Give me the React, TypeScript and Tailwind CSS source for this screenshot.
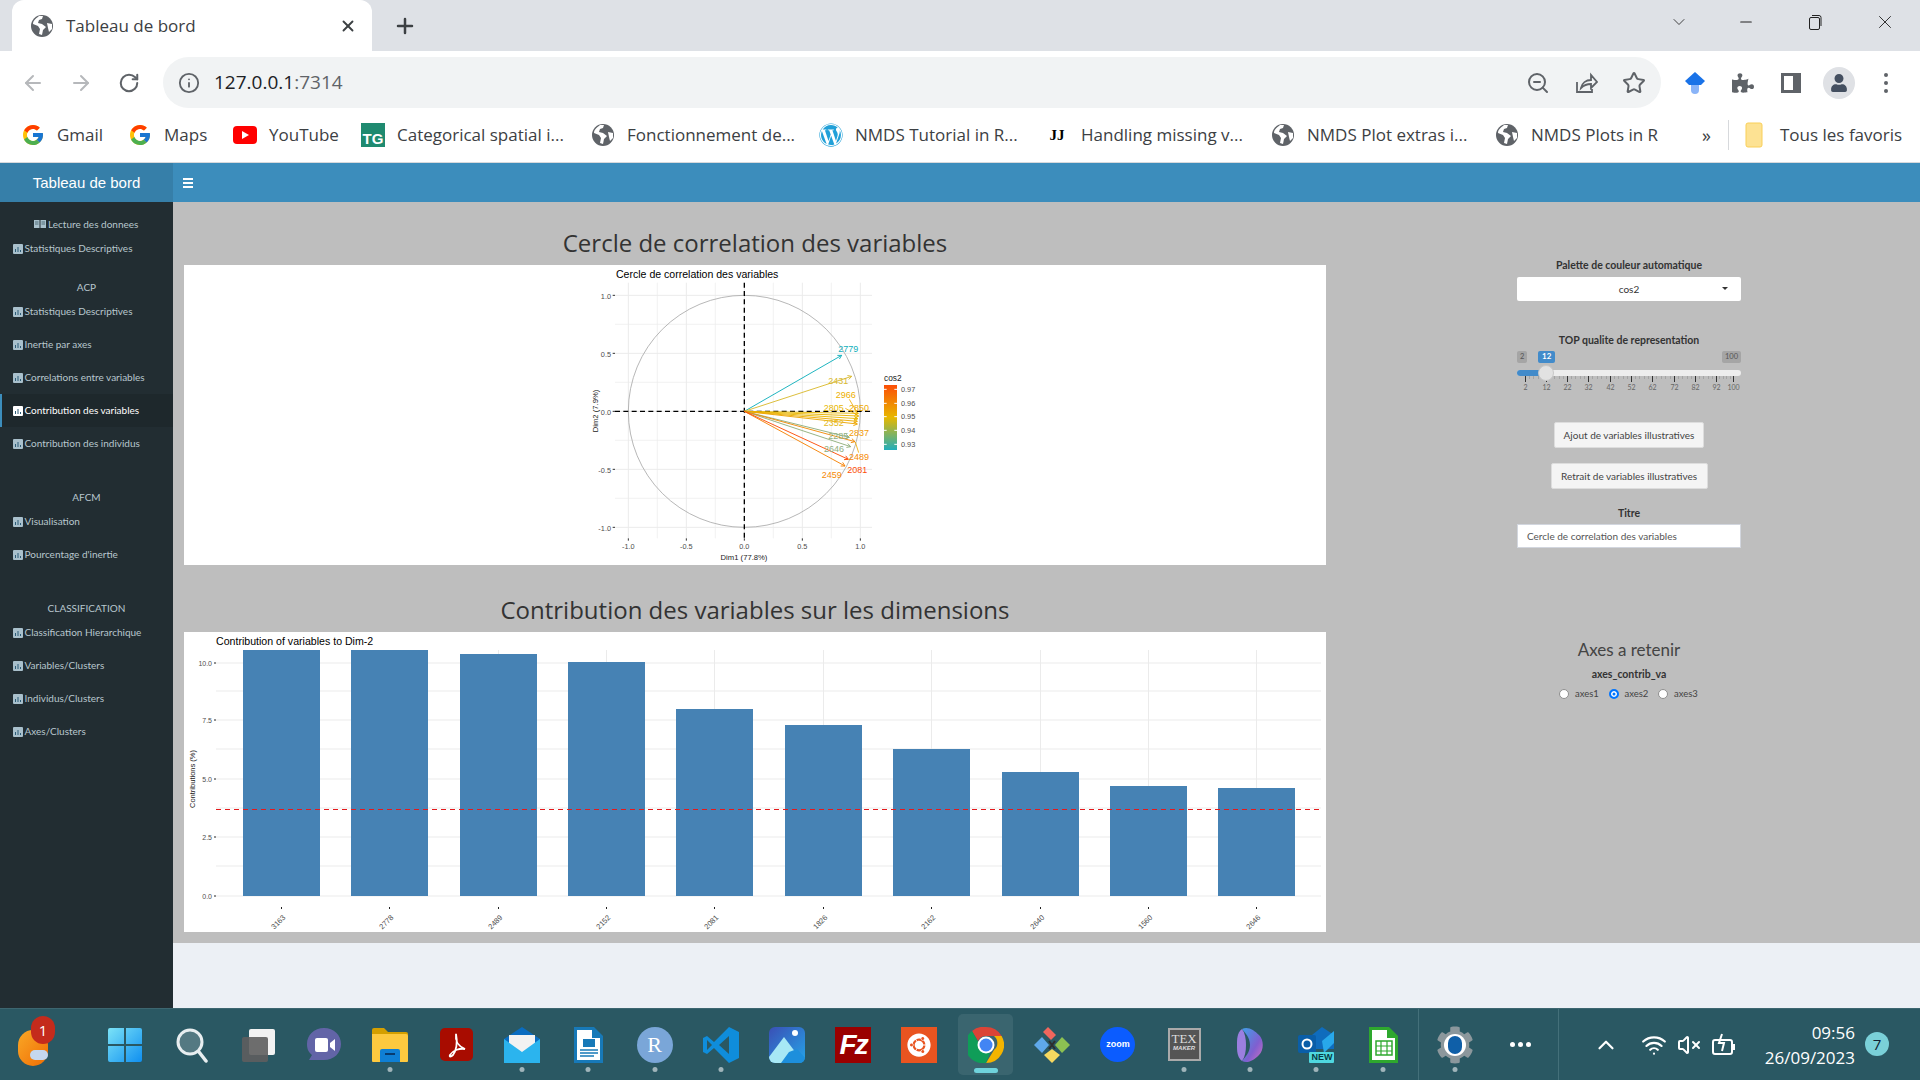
import { ArrowLeft, ArrowRight, ChevronDown, ChevronUp, Info, Minus, Plus, RotateCw, Star, VolumeX, Wifi, X, ZoomOut } from 'lucide-react';
import type { ReactNode } from 'react';
import { FaCog, FaPuzzlePiece, FaUbuntu, FaUser, FaWordpress } from 'react-icons/fa';
import { FcGoogle } from 'react-icons/fc';

const Globe = () => (
  <svg width="24" height="24" viewBox="0 0 24 24">
    <circle cx="12" cy="12" r="11" fill="#5f6368" />
    <path d="M9 2c-2 2-6 4-6 8l5 2 2 3-1 5 3 1 1-5 3-3-4-3-4-1 1-3 3-1 1-3z" fill="#fff" />
    <path d="M17 9l5 1v5l-3 3-1-4z" fill="#fff" />
  </svg>
);

const bookmarks = [
  { w: 107, label: 'Gmail', icon: <FcGoogle size={24} /> },
  { w: 105, label: 'Maps', icon: <FcGoogle size={24} /> },
  {
    w: 128,
    label: 'YouTube',
    icon: (
      <svg width="24" height="18" viewBox="0 0 24 18">
        <rect width="24" height="18" rx="4" fill="#f00" />
        <path d="M9 5l7 4-7 4z" fill="#fff" />
      </svg>
    ),
  },
  {
    w: 230,
    label: 'Categorical spatial i...',
    icon: (
      <div className="w-6 h-6 bg-[#1f8a70] flex items-end justify-center text-white text-[15px] leading-4 font-bold font-['Liberation_Sans',sans-serif]">TG</div>
    ),
  },
  { w: 228, label: 'Fonctionnement de...', icon: <Globe /> },
  { w: 226, label: 'NMDS Tutorial in R...', icon: <FaWordpress size={24} color="#21a0d8" /> },
  { w: 226, label: 'Handling missing v...', icon: <span className="text-black font-bold text-[15px] font-['Liberation_Serif',serif]">JJ</span> },
  { w: 224, label: 'NMDS Plot extras i...', icon: <Globe /> },
  { w: 206, label: 'NMDS Plots in R', icon: <Globe /> },
];

// sidebar icon: small bar chart tile
const BarTile = ({ active }: { active?: boolean }) => (
  <svg width="10" height="10" viewBox="0 0 10 10" className="shrink-0">
    <rect width="10" height="10" rx="1" fill={active ? '#ffffff' : '#a9c0cc'} />
    <path d="M2 5h1v3H2zM4.500 3h1v5h-1zM7 6h1v2H7z" fill="#2c5d78" />
  </svg>
);

const SideItem = ({ label, active }: { label: string; active?: boolean }) => (
  <div className={`h-[33px] flex items-center pl-[13px] gap-[1.500px] ${active ? 'bg-[#1e282c] text-white relative' : 'text-[#b8c7ce]'}`}>
    {active && <div className="absolute left-0 top-0 bottom-0 w-[2px] bg-[#3c8dbc]" />}
    <BarTile active={active} />
    <span className="whitespace-nowrap">{label}</span>
  </div>
);

const SideHeading = ({ label, className }: { label: string; className: string }) => (
  <div className={`text-center text-[#b8c7ce] leading-[14px] ${className}`}>{label}</div>
);

const Sidebar = () => (
  <div className="w-[173px] shrink-0 bg-[#222d32] text-[10px] font-['Lato',sans-serif]">
    <div className="h-[39px] pt-[1px] bg-[#367fa9] flex items-center justify-center text-white text-[15px] font-['Liberation_Sans',sans-serif]">Tableau de bord</div>
    <div className="mt-[15px] h-[14px] flex items-center pl-[34px] gap-[2px] text-[#b8c7ce]">
      <svg width="12" height="9" viewBox="0 0 12 9" className="shrink-0">
        <path d="M0 0h5.500v8H0zM6.500 0H12v8H6.500z" fill="#a9c0cc" />
        <path d="M1 2h3.500M1 4h3.500M7.500 2H11M7.500 4H11" stroke="#2c4a58" strokeWidth=".7" />
      </svg>
      <span>Lecture des donnees</span>
    </div>
    <div className="mt-[1px]"><SideItem label="Statistiques Descriptives" /></div>
    <SideHeading label="ACP" className="mt-[15px]" />
    <div className="mt-[1px]">
      <SideItem label="Statistiques Descriptives" />
      <SideItem label="Inertie par axes" />
      <SideItem label="Correlations entre variables" />
      <SideItem label="Contribution des variables" active />
      <SideItem label="Contribution des individus" />
    </div>
    <SideHeading label="AFCM" className="mt-[30px]" />
    <div className="mt-[1px]">
      <SideItem label="Visualisation" />
      <SideItem label="Pourcentage d'inertie" />
    </div>
    <SideHeading label="CLASSIFICATION" className="mt-[30px]" />
    <div className="mt-[1px]">
      <SideItem label="Classification Hierarchique" />
      <SideItem label="Variables/Clusters" />
      <SideItem label="Individus/Clusters" />
      <SideItem label="Axes/Clusters" />
    </div>
  </div>
);

const Arrow = ({ x, y, color }: { x: number; y: number; color: string }) => {
  const a = Math.atan2(y - 454, x - 523);
  const len = 13;
  const p1 = [x - len * Math.cos(a - 0.5), y - len * Math.sin(a - 0.5)];
  const p2 = [x - len * Math.cos(a + 0.5), y - len * Math.sin(a + 0.5)];
  return (
    <g stroke={color} strokeWidth="2.800" fill="none">
      <line x1="523" y1="454" x2={x} y2={y} />
      <path d={`M${p1[0]} ${p1[1]}L${x} ${y}L${p2[0]} ${p2[1]}`} />
    </g>
  );
};

const arrows = [
  { x: 815, y: 286, color: '#0fafbb' },
  { x: 845, y: 349, color: '#d9b92e' },
  { x: 865, y: 460, color: '#e7b800' },
  { x: 866, y: 468, color: '#e9b300' },
  { x: 864, y: 476, color: '#e7b800' },
  { x: 862, y: 484, color: '#eeaa00' },
  { x: 862, y: 492, color: '#eda600' },
  { x: 838, y: 532, color: '#8fae7c' },
  { x: 842, y: 560, color: '#8fae7c' },
  { x: 855, y: 545, color: '#f28a05' },
  { x: 825, y: 618, color: '#f58000' },
  { x: 835, y: 598, color: '#fc4e07' },
];

const arrowLabels = [
  { t: '2779', x: 835, y: 275, c: '#0fafbb' },
  { t: '2431', x: 805, y: 371, c: '#d9b92e' },
  { t: '2966', x: 827, y: 413, c: '#ecb000' },
  { t: '2805', x: 791, y: 453, c: '#e7b800' },
  { t: '2850', x: 867, y: 453, c: '#eeaa00' },
  { t: '2352', x: 791, y: 498, c: '#e4ba1c' },
  { t: '2285', x: 805, y: 537, c: '#8fae7c' },
  { t: '2837', x: 867, y: 527, c: '#f29a05' },
  { t: '2646', x: 792, y: 575, c: '#8fae7c' },
  { t: '2489', x: 867, y: 599, c: '#f58a05' },
  { t: '2081', x: 862, y: 640, c: '#fc4e07' },
  { t: '2459', x: 785, y: 653, c: '#f58a05' },
];

const gridStops = [175, 262, 349, 436, 523, 610, 697, 784, 871];
const gridStopsY = [106, 193, 280, 367, 454, 541, 628, 715, 802];

// drawn in the units of the zoomed crop, 3 per pixel
const CircleChart = () => (
  <svg width="1142" height="300" viewBox="-1158 15 3426 900" className="block bg-white font-['Liberation_Sans',sans-serif]">
    <text x="138" y="53" fontSize="31.700" fill="#000">Cercle de correlation des variables</text>
    {gridStops.map((x) => <line key={x} x1={x} x2={x} y1="68" y2="835" stroke="#ebebeb" strokeWidth={(x - 175) % 174 === 0 ? 3 : 2} />)}
    {gridStopsY.map((y) => <line key={y} y1={y} y2={y} x1="135" x2="906" stroke="#ebebeb" strokeWidth={(y - 106) % 174 === 0 ? 3 : 2} />)}
    <circle cx="523" cy="454" r="348" fill="none" stroke="#a8a8a8" strokeWidth="2.500" />
    <line x1="135" x2="906" y1="454" y2="454" stroke="#000" strokeWidth="4" strokeDasharray="15 10" />
    <line x1="523" x2="523" y1="68" y2="835" stroke="#000" strokeWidth="4" strokeDasharray="15 10" />
    {arrows.map((a) => <Arrow key={`${a.x}-${a.y}`} {...a} />)}
    <g stroke="#eeaa00" strokeWidth="2.500">
      <line x1="838" y1="418" x2="864" y2="462" />
      <line x1="826" y1="445" x2="862" y2="465" />
      <line x1="856" y1="546" x2="866" y2="578" />
    </g>
    {arrowLabels.map((l) => (
      <text key={l.t} x={l.x} y={l.y} fontSize="27" fill={l.c} textAnchor="middle">{l.t}</text>
    ))}
    {[['1.0', 106], ['0.5', 280], ['0.0', 454], ['-0.5', 628], ['-1.0', 802]].map(([t, y]) => (
      <g key={t}>
        <line x1="128" x2="135" y1={y} y2={y} stroke="#333" strokeWidth="3" />
        <text x="123" y={Number(y) + 10} fontSize="22" textAnchor="end" fill="#4d4d4d">{t}</text>
      </g>
    ))}
    {[['-1.0', 175], ['-0.5', 349], ['0.0', 523], ['0.5', 697], ['1.0', 871]].map(([t, x]) => (
      <g key={t}>
        <line x1={x} x2={x} y1="835" y2="842" stroke="#333" strokeWidth="3" />
        <text x={x} y="867" fontSize="22" textAnchor="middle" fill="#4d4d4d">{t}</text>
      </g>
    ))}
    <text x="522" y="900" fontSize="23" textAnchor="middle" fill="#222">Dim1 (77.8%)</text>
    <text transform="translate(85 453) rotate(-90)" fontSize="23" textAnchor="middle" fill="#222">Dim2 (7.9%)</text>
    <text x="942" y="364" fontSize="25" fill="#222">cos2</text>
    <defs>
      <linearGradient id="cos2" x1="0" y1="0" x2="0" y2="1">
        <stop offset="0" stopColor="#fc4e07" />
        <stop offset="0.5" stopColor="#e7b800" />
        <stop offset="1" stopColor="#22aebb" />
      </linearGradient>
    </defs>
    <rect x="942" y="375" width="39" height="195" fill="url(#cos2)" />
    {[['0.97', 388], ['0.96', 430], ['0.95', 470], ['0.94', 511], ['0.93', 553]].map(([t, y]) => (
      <g key={t}>
        <path d={`M942 ${y}h8M973 ${y}h8`} stroke="#fff" strokeWidth="3" />
        <text x="993" y={Number(y) + 8} fontSize="22" fill="#4d4d4d">{t}</text>
      </g>
    ))}
  </svg>
);

const bars = [
  { x: 243, top: 650, label: '3163' },
  { x: 351, top: 650, label: '2778' },
  { x: 460, top: 654, label: '2489' },
  { x: 568, top: 662, label: '2152' },
  { x: 676, top: 709, label: '2081' },
  { x: 785, top: 725, label: '1826' },
  { x: 893, top: 749, label: '2162' },
  { x: 1002, top: 772, label: '2640' },
  { x: 1110, top: 786, label: '1560' },
  { x: 1218, top: 788, label: '2646' },
];

const BarChart = () => (
  <svg width="1142" height="300" viewBox="184 632 1142 300" className="block bg-white font-['Liberation_Sans',sans-serif]">
    <text x="216" y="645" fontSize="10.600" fill="#000">Contribution of variables to Dim-2</text>
    {[663, 691, 720, 749, 779, 808, 837, 866, 896].map((y) => (
      <line key={y} x1="216" x2="1321" y1={y} y2={y} stroke="#ebebeb" strokeWidth="1" />
    ))}
    {bars.map((b) => (
      <line key={b.x} x1={b.x + 38.500} x2={b.x + 38.500} y1="650" y2="896" stroke="#ebebeb" strokeWidth="1" />
    ))}
    {bars.map((b) => (
      <g key={b.label}>
        <rect x={b.x} y={b.top} width="77" height={896 - b.top} fill="#4682b4" />
        <line x1={b.x + 38.500} x2={b.x + 38.500} y1="907" y2="909" stroke="#222" />
        <text transform={`translate(${b.x + 43} 918) rotate(-45)`} fontSize="7.500" textAnchor="end" fill="#4d4d4d">{b.label}</text>
      </g>
    ))}
    <line x1="216" x2="1321" y1="809.500" y2="809.500" stroke="#e41a1c" strokeWidth="1" strokeDasharray="5 4" />
    {[['10.0', 663], ['7.5', 720], ['5.0', 779], ['2.5', 837], ['0.0', 896]].map(([t, y]) => (
      <g key={t}>
        <line x1="214" x2="216" y1={y} y2={y} stroke="#222" />
        <text x="212" y={Number(y) + 2.500} fontSize="7" textAnchor="end" fill="#4d4d4d">{t}</text>
      </g>
    ))}
    <text transform="translate(195 779) rotate(-90)" fontSize="7.500" textAnchor="middle" fill="#222">Contributions (%)</text>
  </svg>
);

const sliderMajor = [1525, 1546, 1567, 1588, 1610, 1631, 1652, 1674, 1695, 1716, 1733];
const sliderLabels = ['2', '12', '22', '32', '42', '52', '62', '72', '82', '92', '100'];

const Slider = () => (
  <div className="relative w-[224px] h-[46px]">
    <span className="absolute left-0 top-0 h-[12px] px-[3px] rounded-[2px] bg-[#a5a5a5] text-[#555] text-[7.500px] leading-[11px]">2</span>
    <span className="absolute left-[21px] top-0 h-[12px] px-[4px] rounded-[2px] bg-[#428bca] text-white font-bold text-[8px] leading-[11px]">12</span>
    <span className="absolute right-0 top-0 h-[12px] px-[3px] rounded-[2px] bg-[#a5a5a5] text-[#555] text-[7.500px] leading-[11px]">100</span>
    <div className="absolute left-0 right-0 top-[19px] h-[6px] rounded-full bg-[#ededed]" />
    <div className="absolute left-0 w-[28px] top-[19px] h-[6px] rounded-l-full bg-[#428bca]" />
    <svg width="224" height="30" viewBox="1517 376 224 30" className="absolute left-0 top-[25px]">
      {sliderMajor.map((x, i) => (
        <g key={x}>
          <line x1={x + 0.500} x2={x + 0.500} y1="376" y2="382" stroke="#333" />
          <text x={x + 0.500} y="390" textAnchor="middle" fontSize="7" fill="#666">{sliderLabels[i]}</text>
          {i < 10 && [1, 2, 3, 4].map((k) => {
            const mx = Math.round(x + ((sliderMajor[i + 1] - x) * k) / 5) + 0.500;
            return <line key={k} x1={mx} x2={mx} y1="376" y2="379" stroke="#a4a4a4" />;
          })}
        </g>
      ))}
    </svg>
    <div className="absolute left-[21px] top-[14px] w-[16px] h-[16px] rounded-full bg-[#e2e2e2] border border-[#c8c8c8]" />
  </div>
);

const Radio = ({ label, on }: { label: string; on?: boolean }) => (
  <div className="flex items-center w-[49.500px]">
    <div className={`w-[10px] h-[10px] rounded-full ${on ? 'border-2 border-[#0075ff] shadow-[inset_0_0_0_1.500px_#fff] bg-[#0075ff]' : 'bg-white border border-[#8f8f8f]'}`} />
    <span className="ml-[6px] text-[9.500px] text-[#444] leading-none">{label}</span>
  </div>
);

const RightPanel = () => (
  <div className="ml-[191px] w-[224px] flex flex-col items-center font-['Lato',sans-serif] text-[#333]">
    <div className="mt-[56px] text-[10.500px] font-bold leading-[14px]">Palette de couleur automatique</div>
    <div className="mt-[5px] w-full h-[24px] bg-white rounded-[2px] flex items-center justify-center relative text-[10px] text-[#333]">
      cos2
      <div className="absolute right-[13px] top-[10px] border-x-[3.500px] border-x-transparent border-t-[3.500px] border-t-[#333]" />
    </div>
    <div className="mt-[32px] text-[10.500px] font-bold leading-[14px]">TOP qualite de representation</div>
    <div className="mt-[4px]"><Slider /></div>
    <button className="mt-[25px] w-[150px] h-[26px] bg-[#f4f4f4] border border-[#ddd] rounded-[2px] text-[10px] text-[#444]">Ajout de variables illustratives</button>
    <button className="mt-[15px] w-[157px] h-[26px] bg-[#f4f4f4] border border-[#ddd] rounded-[2px] text-[10px] text-[#444]">Retrait de variables illustratives</button>
    <div className="mt-[17px] text-[10.500px] font-bold leading-[14px]">Titre</div>
    <div className="mt-[4px] w-full h-[24px] bg-white border border-[#d2d6de] flex items-center pl-[9px] text-[10px] text-[#555]">Cercle de correlation des variables</div>
    <div className="mt-[90px] text-[17px] leading-[24px] text-[#444]">Axes a retenir</div>
    <div className="mt-[5px] text-[10.500px] font-bold leading-[14px]">axes_contrib_va</div>
    <div className="mt-[8px] flex self-start ml-[42px]">
      <Radio label="axes1" />
      <Radio label="axes2" on />
      <Radio label="axes3" />
    </div>
  </div>
);

const Content = () => (
  <div className="flex-1 flex flex-col">
    <div className="h-[39px] bg-[#3c8dbc] flex items-center pl-[10px]">
      <div className="w-[10px] flex flex-col gap-[2px]">
        <div className="h-[2px] bg-white" />
        <div className="h-[2px] bg-white" />
        <div className="h-[2px] bg-white" />
      </div>
    </div>
    <div className="h-[741px] bg-[#bebebe] flex">
      <div className="ml-[11px] w-[1142px]">
        <h3 className="h-[63px] pt-[24px] text-center text-[#333] text-[24px] leading-[34px] font-['Open_Sans',sans-serif] whitespace-nowrap">Cercle de correlation des variables</h3>
        <CircleChart />
        <h3 className="h-[67px] pt-[28px] text-center text-[#333] text-[24px] leading-[34px] font-['Open_Sans',sans-serif] whitespace-nowrap">Contribution des variables sur les dimensions</h3>
        <BarChart />
      </div>
      <RightPanel />
    </div>
    <div className="flex-1 bg-[#ecf0f5]" />
  </div>
);

const Tile = ({ children, className }: { children?: ReactNode; className: string }) => (
  <div className={`flex items-center justify-center ${className}`}>{children}</div>
);

const taskIcons: { key: string; dot?: boolean; node: ReactNode }[] = [
  {
    key: 'win',
    node: (
      <svg width="36" height="36" viewBox="0 0 36 36">
        <defs>
          <linearGradient id="win" x1="0" y1="0" x2="1" y2="1">
            <stop offset="0" stopColor="#7be3f7" />
            <stop offset="1" stopColor="#0f8ff0" />
          </linearGradient>
        </defs>
        <path d="M1 3a2 2 0 012-2h14v16H1zM19 1h14a2 2 0 012 2v14H19zM1 19h16v16H3a2 2 0 01-2-2zM19 19h16v14a2 2 0 01-2 2H19z" fill="url(#win)" />
      </svg>
    ),
  },
  {
    key: 'search',
    node: (
      <svg width="36" height="36" viewBox="0 0 36 36">
        <circle cx="17" cy="15" r="12" fill="#ffffff33" stroke="#e8eef0" strokeWidth="3" />
        <path d="M26 25l7 9" stroke="#e8eef0" strokeWidth="3.500" strokeLinecap="round" />
      </svg>
    ),
  },
  {
    key: 'view',
    node: (
      <svg width="36" height="36" viewBox="0 0 36 36">
        <rect x="10" y="2" width="26" height="26" rx="2" fill="#f2f2f2" />
        <rect x="3" y="10" width="26" height="25" rx="2" fill="#5e5e5e" fillOpacity=".9" />
      </svg>
    ),
  },
  {
    key: 'meet',
    node: (
      <svg width="36" height="36" viewBox="0 0 36 36">
        <path d="M18 1c10 0 17 7 17 16s-7 16-17 16H3l3-5C2 25 1 21 1 17 1 8 8 1 18 1z" fill="#6264a7" />
        <rect x="9" y="11" width="13" height="14" rx="2" fill="#fff" />
        <path d="M24 16l5-4v12l-5-4z" fill="#fff" />
      </svg>
    ),
  },
  {
    key: 'folder',
    dot: true,
    node: (
      <svg width="36" height="36" viewBox="0 0 36 36">
        <path d="M0 3a2 2 0 012-2h10l4 4h18a2 2 0 012 2v3H0z" fill="#d49f00" />
        <path d="M0 7h34a2 2 0 012 2v25a1 1 0 01-1 1H1a1 1 0 01-1-1z" fill="#fdc93f" />
        <path d="M8 24a2 2 0 012-2h16a2 2 0 012 2v11H8z" fill="#0f7fd4" />
        <rect x="13" y="26" width="10" height="2" fill="#083b6e" />
      </svg>
    ),
  },
  {
    key: 'acrobat',
    node: (
      <svg width="33" height="33" viewBox="0 0 33 33">
        <rect width="33" height="33" rx="5" fill="#a80c00" />
        <path d="M16 6c-1 6 2 12 9 15-5-1-12 1-15 6-1 2 1 2 3 0 3-4 5-12 3-21z" fill="none" stroke="#fff" strokeWidth="1.800" />
      </svg>
    ),
  },
  {
    key: 'mail',
    dot: true,
    node: (
      <svg width="36" height="36" viewBox="0 0 36 36">
        <path d="M0 12L18 0l18 12v24H0z" fill="#0a6cc0" />
        <path d="M5 8h26v10L18 26 5 18z" fill="#f2f2f2" />
        <path d="M0 12l18 13 18-13v24H0z" fill="#2bb4ee" />
      </svg>
    ),
  },
  {
    key: 'writer',
    dot: true,
    node: (
      <svg width="36" height="36" viewBox="0 0 36 36">
        <path d="M4 0h20l9 9v27H4z" fill="#1779b8" />
        <path d="M7 3h15v8h8v22H7z" fill="#fff" />
        <rect x="13" y="12" width="12" height="8" fill="#1779b8" />
        <path d="M10 23h18M10 26h18M10 29h14" stroke="#1779b8" strokeWidth="1.500" />
      </svg>
    ),
  },
  {
    key: 'r',
    dot: true,
    node: <Tile className="w-[36px] h-[36px] rounded-full bg-[#7aa6d8] text-white text-[22px] font-['Liberation_Serif',serif]">R</Tile>,
  },
  {
    key: 'code',
    dot: true,
    node: (
      <svg width="36" height="36" viewBox="0 0 36 36">
        <path d="M26 0l10 5v26l-10 5-15-15-7 6-4-2V11l4-2 7 6z" fill="#0f8ddb" />
        <path d="M26 9l-10 9 10 9z" fill="#2a5863" />
        <path d="M4 13l5 5-5 5z" fill="#2a5863" />
      </svg>
    ),
  },
  {
    key: 'photos',
    node: (
      <svg width="36" height="36" viewBox="0 0 36 36">
        <defs>
          <linearGradient id="ph" x1="0" y1="0" x2="1" y2="1">
            <stop offset="0" stopColor="#3a4fb5" />
            <stop offset="1" stopColor="#25a4e8" />
          </linearGradient>
        </defs>
        <rect width="36" height="36" x="0" y="0" rx="6" fill="url(#ph)" />
        <circle cx="26" cy="6" r="3" fill="#fff" />
        <path d="M0 30L15 10l12 16-6 10H6a6 6 0 01-6-6z" fill="#a7e8f5" />
        <path d="M12 36l8-11 8-3 8 9v0a6 6 0 01-6 5z" fill="#1d8fdc" />
      </svg>
    ),
  },
  {
    key: 'fz',
    node: <Tile className="w-[36px] h-[36px] bg-[#9a0000] text-white italic font-bold text-[28px] tracking-[-2px] font-['Liberation_Sans',sans-serif]">Fz</Tile>,
  },
  {
    key: 'ubuntu',
    node: (
      <Tile className="w-[36px] h-[36px] bg-[#e95420]">
        <FaUbuntu size={24} color="#fff" />
      </Tile>
    ),
  },
  {
    key: 'chrome',
    node: (
      <svg width="36" height="36" viewBox="0 0 36 36">
        <path d="M18 0a18 18 0 0115.600 9H18a9 9 0 00-8 5L4 4a18 18 0 0114-4z" fill="#db4437" />
        <path d="M33.600 9A18 18 0 0118 36l8-13a9 9 0 000-14z" fill="#f4b400" />
        <path d="M18 36A18 18 0 014 4l8 14a9 9 0 0010 8z" fill="#0f9d58" />
        <circle cx="18" cy="18" r="8.500" fill="#fff" />
        <circle cx="18" cy="18" r="6.500" fill="#4285f4" />
      </svg>
    ),
  },
  {
    key: 'kite',
    node: (
      <svg width="36" height="36" viewBox="0 0 36 36">
        <path d="M14 0l8 8-5 5-8-8z" fill="#f0665d" />
        <path d="M8 10l7 8-7 8-8-8z" fill="#5fa8ea" />
        <path d="M28 10l8 8-8 8-7-8z" fill="#8cc152" />
        <path d="M18 22l8 6-8 8-8-8z" fill="#f6d860" />
        <path d="M15 14l6 8M21 14l-6 8" stroke="#2d2d2d" strokeWidth="2" />
      </svg>
    ),
  },
  {
    key: 'zoom',
    node: <Tile className="w-[35px] h-[35px] rounded-full bg-[#0b5cff] text-white text-[9px] font-bold font-['Liberation_Sans',sans-serif]">zoom</Tile>,
  },
  {
    key: 'tex',
    dot: true,
    node: (
      <div className="w-[33px] h-[33px] bg-[#555] border-2 border-[#aaa] text-[#ddd] flex flex-col items-center font-['Liberation_Serif',serif] leading-none">
        <span className="text-[13px] mt-[2px]">TEX</span>
        <span className="text-[6px] italic font-bold font-['Liberation_Sans',sans-serif]">MAKER</span>
      </div>
    ),
  },
  {
    key: 'copilot',
    dot: true,
    node: (
      <svg width="36" height="36" viewBox="0 0 36 36">
        <defs>
          <linearGradient id="cp" x1="0" y1="0" x2="1" y2="1">
            <stop offset="0" stopColor="#3fa0e8" />
            <stop offset=".6" stopColor="#7f5fd0" />
            <stop offset="1" stopColor="#d070c0" />
          </linearGradient>
        </defs>
        <path d="M10 2c6-3 12 1 17 6 5 5 5 15 0 20-5 5-11 9-17 6 3-4 8-8 8-16S13 6 10 2z" fill="url(#cp)" />
        <path d="M10 2C5 6 5 12 5 18s0 12 5 16c3-4 4-10 4-16S13 6 10 2z" fill="#9b7fe0" />
      </svg>
    ),
  },
  {
    key: 'outlook',
    dot: true,
    node: (
      <div className="relative w-[36px] h-[36px]">
        <svg width="36" height="36" viewBox="0 0 36 36">
          <path d="M14 8l10-8 12 8v14H14z" fill="#0f6cbd" />
          <path d="M24 14L36 4v12L26 26z" fill="#28a8ea" />
          <rect x="0" y="8" width="18" height="18" rx="2" fill="#0a5ea8" />
          <circle cx="9" cy="17" r="4.500" fill="none" stroke="#fff" strokeWidth="2" />
        </svg>
        <span className="absolute right-0 bottom-0 px-[2px] bg-[#4fd8e0] text-[#063a46] text-[9px] font-bold leading-[11px] rounded-[1px] font-['Liberation_Sans',sans-serif]">NEW</span>
      </div>
    ),
  },
  {
    key: 'calc',
    dot: true,
    node: (
      <svg width="36" height="36" viewBox="0 0 36 36">
        <path d="M4 0h20l9 9v27H4z" fill="#2ea82e" />
        <path d="M7 3h15v8h8v22H7z" fill="#fff" />
        <path d="M11 14h16v14H11z" fill="none" stroke="#2ea82e" strokeWidth="1.500" />
        <path d="M11 19h16M11 24h16M16 14v14M22 14v14" stroke="#2ea82e" strokeWidth="1.200" />
      </svg>
    ),
  },
];

const Taskbar = () => (
  <div className="relative h-[72px] bg-[#2a5863] border-t border-[#3d6670] flex items-center text-white">
    <div className="relative w-[92px] h-full flex items-center pl-[18px]">
      <div className="w-[30px] h-[36px] rounded-full bg-gradient-to-br from-[#f9a825] to-[#ef6c00] mt-[6px] relative">
        <div className="absolute right-0 bottom-[6px] w-[18px] h-[10px] rounded-full bg-[#c5d8ee]" />
      </div>
    </div>
    {/* icon row, 66px apart */}
    {taskIcons.map((it) => (
      <div key={it.key} className="relative w-[66.200px] h-full flex items-center justify-center shrink-0">
        {it.key === 'chrome' && <div className="absolute left-[6px] right-[6px] top-[5px] bottom-[5px] rounded-[5px] bg-[#ffffff14]" />}
        <div className="relative">{it.node}</div>
        {it.dot && <div className="absolute bottom-[8px] left-1/2 -translate-x-1/2 w-[5px] h-[5px] rounded-full bg-[#9fb4ba]" />}
        {it.key === 'chrome' && <div className="absolute bottom-[7px] left-1/2 -translate-x-1/2 w-[24px] h-[5px] rounded-full bg-[#6fd3dc]" />}
      </div>
    ))}
    <div className="w-[6px] h-full border-l border-[#44707a] ml-[2px]" />
    <div className="relative w-[66px] h-full flex items-center justify-center ml-[-2px]">
      <div className="relative flex items-center justify-center">
        <FaCog size={38} color="#8b979c" />
        <div className="absolute w-[22px] h-[22px] rounded-full bg-white" />
        <div className="absolute w-[14px] h-[18px] rounded-full bg-[#0f5fa8]" />
      </div>
      <div className="absolute bottom-[8px] left-1/2 -translate-x-1/2 w-[5px] h-[5px] rounded-full bg-[#9fb4ba]" />
    </div>
    <div className="w-[66px] flex justify-center gap-[3px]">
      <div className="w-[5px] h-[5px] rounded-full bg-white" />
      <div className="w-[5px] h-[5px] rounded-full bg-white" />
      <div className="w-[5px] h-[5px] rounded-full bg-white" />
    </div>
    <div className="h-full border-l border-[#44707a] ml-[4px]" />
    <ChevronUp size={26} className="ml-[34px]" />
    <Wifi size={26} className="ml-[22px]" />
    <VolumeX size={24} className="ml-[10px]" />
    <svg width="26" height="26" viewBox="0 0 26 26" fill="none" stroke="#fff" strokeWidth="2" className="ml-[10px]">
      <rect x="2" y="8" width="19" height="14" rx="2" />
      <path d="M23 12v6M11 2l-3 9h5l-2 8" />
    </svg>
    <div className="ml-auto pr-[65px] flex flex-col items-end text-[17px] leading-[25px] font-['Open_Sans',sans-serif]">
      <span>09:56</span>
      <span>26/09/2023</span>
    </div>
    <div className="absolute left-[1865px] top-[23px] w-[24px] h-[24px] rounded-full bg-[#7ad0d8] text-[#123] text-[15px] flex items-center justify-center font-['Open_Sans',sans-serif]">7</div>
    <div className="absolute left-[31px] top-[7px] w-[24px] h-[28px] rounded-full bg-[#c42b1c] text-[15px] flex items-center justify-center font-['Open_Sans',sans-serif]">1</div>
  </div>
);

const BrowserChrome = () => (
  <div className="font-['Open_Sans',sans-serif] text-[#3c4043]">
    <div className="h-[51px] bg-[#dee1e6] flex items-end pl-[12px]">
      <div className="w-[360px] h-[51px] bg-white rounded-t-[12px] flex items-center pl-[18px]">
        <Globe />
        <span className="ml-[12px] text-[17px]">Tableau de bord</span>
        <X size={18} strokeWidth={2.500} className="ml-auto mr-[15px]" />
      </div>
      <div className="h-[51px] flex items-center ml-[21px]">
        <Plus size={24} strokeWidth={2.500} />
      </div>
      <div className="ml-auto h-[51px] pb-[8px] flex items-center text-[#222]">
        <ChevronDown size={20} strokeWidth={1} className="mr-[48px]" />
        <Minus size={18} strokeWidth={1.500} className="mr-[51px]" />
        <svg width="18" height="18" viewBox="0 0 18 18" fill="none" stroke="#222" className="mr-[50px]">
          <rect x="3.500" y="4.500" width="10" height="12" rx="1.500" />
          <path d="M6 2.500h7a2 2 0 012 2V13" />
        </svg>
        <X size={22} strokeWidth={1} className="mr-[24px]" />
      </div>
    </div>
    <div className="h-[57px] pt-[6px] bg-white flex items-center">
      <ArrowLeft size={24} color="#b6b8bb" strokeWidth={2} className="ml-[21px]" />
      <ArrowRight size={24} color="#b6b8bb" strokeWidth={2} className="ml-[24px]" />
      <RotateCw size={22} color="#5f6368" strokeWidth={2.200} className="ml-[25px]" />
      <div className="ml-[23px] w-[1498px] h-[51px] rounded-full bg-[#f1f3f4] flex items-center pl-[15px] text-[19px]">
        <Info size={22} color="#5f6368" />
        <span className="ml-[14px] text-[#202124]">127.0.0.1<span className="text-[#5f6368]">:7314</span></span>
        <ZoomOut size={24} color="#5f6368" className="ml-auto" />
        <svg width="24" height="24" viewBox="0 0 24 24" fill="none" stroke="#5f6368" strokeWidth="1.800" className="ml-[24px]">
          <path d="M3 11v10h15v-3M7 17c1-5 5-8 10-8V4l6 7-6 6v-4c-4 0-7 1-10 4z" />
        </svg>
        <Star size={24} color="#5f6368" strokeWidth={2} className="ml-[24px] mr-[15px]" />
      </div>
      <div className="flex items-center">
        <svg width="22" height="26" viewBox="0 0 22 26" className="ml-[23px]">
          <path d="M7 12h8v8a4 4 0 01-8 0z" fill="#8ab4f8" />
          <path d="M11 2l10 9-4 4H5l-4-4z" fill="#1a73e8" />
        </svg>
        <FaPuzzlePiece size={22} color="#5f6368" className="ml-[26px]" />
        <svg width="22" height="22" viewBox="0 0 22 22" className="ml-[26px]">
          <path d="M1 1h20v20H1z" fill="#5f6368" />
          <path d="M4 4h9v14H4z" fill="#fff" />
        </svg>
        <div className="ml-[21px] w-[32px] h-[32px] rounded-full bg-[#dfe1e5] flex items-center justify-center">
          <FaUser size={18} color="#444f60" />
        </div>
        <div className="ml-[29px] flex flex-col gap-[4px]">
          <div className="w-[4px] h-[4px] rounded-full bg-[#5f6368]" />
          <div className="w-[4px] h-[4px] rounded-full bg-[#5f6368]" />
          <div className="w-[4px] h-[4px] rounded-full bg-[#5f6368]" />
        </div>
      </div>
    </div>
    <div className="h-[55px] bg-white flex items-center pl-[20px] border-b border-[#d7d9dc] text-[17px]">
      {bookmarks.map((b) => (
        <div key={b.label + b.w} className="flex items-center shrink-0" style={{ width: b.w }}>
          <div className="w-[26px] flex justify-center shrink-0">{b.icon}</div>
          <span className="ml-[11px] whitespace-nowrap">{b.label}</span>
        </div>
      ))}
      <span className="text-[18px] w-[28px] pl-[2px]">»</span>
      <div className="w-px h-[30px] bg-[#d7d9dc] mr-[16px]" />
      <svg width="18" height="26" viewBox="0 0 18 26">
        <path d="M1 3a2 2 0 012-2h12a2 2 0 012 2v20a2 2 0 01-2 2H3a2 2 0 01-2-2z" fill="#fde293" stroke="#f9cf58" />
      </svg>
      <span className="ml-[17px] whitespace-nowrap">Tous les favoris</span>
    </div>
  </div>
);

const App = () => (
  <div className="w-[1920px] h-[1080px] overflow-hidden flex flex-col">
    <BrowserChrome />
    <div className="h-[845px] flex">
      <Sidebar />
      <Content />
    </div>
    <Taskbar />
  </div>
);

export default App;
